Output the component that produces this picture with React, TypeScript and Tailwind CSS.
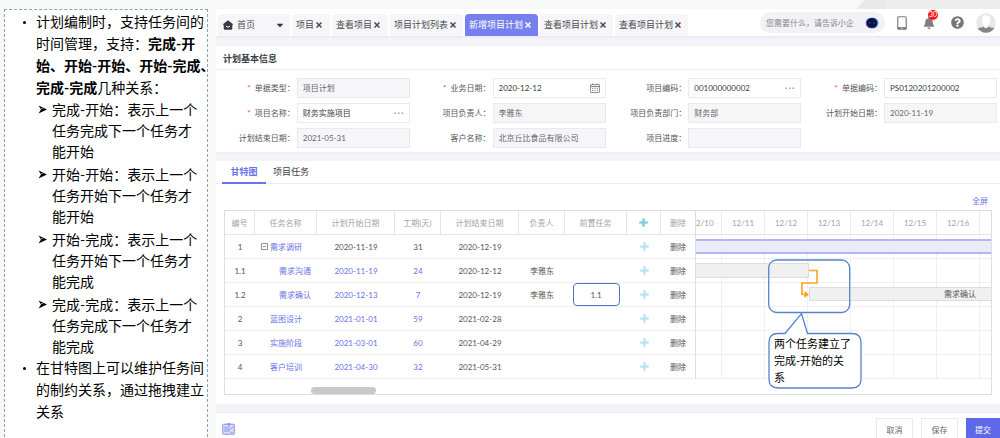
import type { ReactNode } from "react";
import clsx from "clsx";
import { FaBell, FaCaretDown, FaQuestionCircle } from "react-icons/fa";

type Task = {
  no: string;
  name: string;
  level: number;
  start: string;
  days: string;
  end: string;
  owner?: string;
  prev?: string;
  summary?: boolean;
};

const tasks: Task[] = [
  { no: "1", name: "需求调研", level: 0, start: "2020-11-19", days: "31", end: "2020-12-19", summary: true },
  { no: "1.1", name: "需求沟通", level: 1, start: "2020-11-19", days: "24", end: "2020-12-12", owner: "李雅东" },
  { no: "1.2", name: "需求确认", level: 1, start: "2020-12-13", days: "7", end: "2020-12-19", owner: "李雅东", prev: "1.1" },
  { no: "2", name: "蓝图设计", level: 0, start: "2021-01-01", days: "59", end: "2021-02-28" },
  { no: "3", name: "实施阶段", level: 0, start: "2021-03-01", days: "60", end: "2021-04-29" },
  { no: "4", name: "客户培训", level: 0, start: "2021-04-30", days: "32", end: "2021-05-31" },
];

const relations = [
  ["完成-开始：表示上一个", "任务完成下一个任务才", "能开始"],
  ["开始-开始：表示上一个", "任务开始下一个任务才", "能开始"],
  ["开始-完成：表示上一个", "任务开始下一个任务才", "能完成"],
  ["完成-完成：表示上一个", "任务完成下一个任务才", "能完成"],
];

const tabs = [
  { label: "项目", width: "w-[38px]" },
  { label: "查看项目", width: "w-[56px]" },
  { label: "项目计划列表", width: "w-[73px]" },
  { label: "新增项目计划", width: "w-[73px]", active: true },
  { label: "查看项目计划", width: "w-[73px]" },
  { label: "查看项目计划", width: "w-[73px]" },
];

type FieldDef = {
  id: string;
  label: string;
  value: string;
  required?: boolean;
  editable?: boolean;
  icon?: "dots" | "calendar";
};

const fields: FieldDef[] = [
  { id: "type", label: "单据类型", value: "项目计划", required: true },
  { id: "date", label: "业务日期", value: "2020-12-12", required: true, editable: true, icon: "calendar" },
  { id: "code", label: "项目编码", value: "001000000002", editable: true, icon: "dots" },
  { id: "bill", label: "单据编码", value: "PS0120201200002", required: true, editable: true },
  { id: "name", label: "项目名称", value: "财务实施项目", required: true, editable: true, icon: "dots" },
  { id: "owner", label: "项目负责人", value: "李雅东" },
  { id: "dept", label: "项目负责部门", value: "财务部" },
  { id: "start", label: "计划开始日期", value: "2020-11-19" },
  { id: "end", label: "计划结束日期", value: "2021-05-31" },
  { id: "customer", label: "客户名称", value: "北京丘比食品有限公司" },
  { id: "progress", label: "项目进度", value: "" },
];

const days = ["12/11", "12/12", "12/13", "12/14", "12/15", "12/16"];

const HomeIcon = () => (
  <svg viewBox="0 0 20 20" className="size-[10px]" fill="#3a3a42" aria-hidden>
    <path d="M10 0.5 L19.5 8 V10.5 H18.5 V17.5 Q18.5 19.5 16.5 19.5 H3.5 Q1.5 19.5 1.5 17.5 V10.5 H0.5 V8 Z" />
    <path d="M6 12.5 Q10 16 14 12.5" fill="none" stroke="#fff" strokeWidth="2" />
  </svg>
);

const CloseIcon = () => (
  <svg viewBox="0 0 12 12" className="size-[6px]" stroke="currentColor" strokeWidth="3" aria-hidden>
    <path d="M1 1 L11 11 M11 1 L1 11" />
  </svg>
);

const PlusIcon = () => (
  <svg viewBox="0 0 18 18" className="mx-auto size-[9px]" stroke="currentColor" strokeWidth="5" aria-hidden>
    <path d="M9 0.5 V17.5 M0.5 9 H17.5" />
  </svg>
);

const CalendarIcon = () => (
  <svg viewBox="0 0 20 20" className="size-[10px]" fill="none" stroke="#88888e" strokeWidth="1.8" aria-hidden>
    <rect x="1" y="3" width="18" height="16" rx="1" />
    <path d="M1 7 H19" strokeWidth="2.6" />
    <path d="M5.5 0.5 V4 M14.5 0.5 V4" />
    <path d="M4 11 H16 M4 15 H16" strokeDasharray="2.4 2.4" />
  </svg>
);

const RobotIcon = () => (
  <svg viewBox="0 0 40 36" className="h-[12px] w-[14px]" aria-hidden>
    <rect x="1" y="2" width="38" height="32" rx="16" fill="#5b4fe0" />
    <path d="M20 2 A16 16 0 0 1 20 34 H24 A15 16 0 0 0 24 2 Z" fill="#37b6e8" />
    <rect x="4" y="4" width="32" height="28" rx="14" fill="#0b1240" />
    <circle cx="14" cy="18" r="2" fill="#2f66b8" />
    <circle cx="26" cy="18" r="2" fill="#2f66b8" />
  </svg>
);

const PhoneIcon = () => (
  <svg viewBox="0 0 20 28" className="h-[14px] w-[10px]" aria-hidden>
    <rect x="1.5" y="1.5" width="17" height="25" rx="2" fill="#fff" stroke="#808083" strokeWidth="2.4" />
    <path d="M1.5 22 H18.5 V26.5 H1.5 Z" fill="#808083" />
    <circle cx="10" cy="24.2" r="1.4" fill="#fff" />
  </svg>
);

const AvatarIcon = () => (
  <svg viewBox="0 0 44 48" className="h-[22px] w-[20px]" aria-hidden>
    <circle cx="22" cy="24" r="21.5" fill="#e8e8e8" />
    <path d="M3.5 35 Q14 34 17 31 H27 Q30 34 40.5 35 A21.5 21.5 0 0 1 3.5 35 Z" fill="#858587" />
    <path d="M13 16 Q13 7 22 7 Q31 7 31 16 Q31 25 27 29 V33 Q22 38 17 33 V29 Q13 25 13 16 Z" fill="#fff" />
  </svg>
);

const BoardIcon = () => (
  <svg viewBox="0 0 26 26" className="size-[13px]" fill="none" stroke="#8a90ee" strokeWidth="2" aria-hidden>
    <rect x="1.5" y="4.5" width="23" height="20" rx="1" fill="#dcdefb" />
    <path d="M6 9 V20 M10 9 V20 M14 2 V20 M9 4 H18 M17 15 L22 9 M17 20.5 H22" />
  </svg>
);

const Dot = () => (
  <span className="flex h-[22px] w-[31px] shrink-0 items-center pl-[18px]">
    <span className="size-[3px] rounded-full bg-black" />
  </span>
);

function Notes() {
  return (
    <aside className="w-[204px] shrink-0 self-stretch border border-b-0 border-dashed border-[#8fa3ab] bg-white pt-px text-sm whitespace-nowrap text-black">
      <ul>
        <li className="flex leading-[22px]">
          <Dot />
          <p>
            计划编制时，支持任务间的
            <br />
            时间管理，支持：<b>完成-开</b>
            <br />
            <b>始、开始-开始、开始-完成、</b>
            <br />
            <b>完成-完成</b>几种关系：
          </p>
        </li>
        <li>
          <ul className="flex flex-col gap-[2px] pl-[33px] leading-[21px]">
            {relations.map((lines) => (
              <li key={lines[0]} className="flex">
                <span className="flex h-[21px] w-[14px] shrink-0 items-center">
                  <svg viewBox="0 0 18 18" className="size-[9px]" aria-hidden>
                    <path d="M1 1 L18 9 L1 17 L6 9 Z" fill="#000" />
                    <path d="M5.5 5.5 L11 8.2 H7.5 Z" fill="#fff" />
                  </svg>
                </span>
                <p>
                  {lines.map((line) => (
                    <span key={line} className="block">
                      {line}
                    </span>
                  ))}
                </p>
              </li>
            ))}
          </ul>
        </li>
        <li className="flex leading-[22px]">
          <Dot />
          <p>
            在甘特图上可以维护任务间
            <br />
            的制约关系，通过拖拽建立
            <br />
            关系
          </p>
        </li>
      </ul>
    </aside>
  );
}

function TopBar() {
  return (
    <header className="flex h-[29px] shrink-0 items-end justify-between border-b-2 border-[#ebebf9] bg-white pl-[2px]">
      <nav className="flex gap-[2px] text-[9px] text-[#4a4a50]">
        <button className="flex h-[22px] w-[72px] items-center gap-1 rounded-t bg-[#f6f6f8] px-[5px]">
          <HomeIcon />
          <span>首页</span>
          <FaCaretDown className="ml-auto size-[10px] text-[#333]" />
        </button>
        {tabs.map((tab, i) => (
          <button
            key={i}
            className={clsx(
              "flex h-[22px] items-center gap-[2px] rounded-t pl-1 whitespace-nowrap",
              tab.width,
              tab.active ? "bg-[#7580ee] text-white" : "bg-[#f6f6f8]"
            )}
          >
            {tab.label}
            <CloseIcon />
          </button>
        ))}
      </nav>
      <div className="flex h-[27px] items-center pr-1">
        <label className="mr-3 flex h-[21px] w-[125px] items-center rounded-full bg-[#f1f1f6] pr-[6px] pl-[6px]">
          <input
            aria-label="搜索"
            placeholder="您需要什么，请告诉小企"
            className="w-0 min-w-0 flex-1 text-[8px] outline-none placeholder:text-[#85858c]"
          />
          <RobotIcon />
        </label>
        <button aria-label="手机" className="mr-4">
          <PhoneIcon />
        </button>
        <button aria-label="消息" className="relative mr-4 text-[#808083]">
          <FaBell className="size-[12px]" />
          <span className="absolute -top-[7px] left-[5px] flex size-[10px] items-center justify-center rounded-full bg-[#fb1414] text-[7px] text-white">
            30
          </span>
        </button>
        <button aria-label="帮助" className="mr-3 text-[#77777b]">
          <FaQuestionCircle className="size-[13px]" />
        </button>
        <button aria-label="账户">
          <AvatarIcon />
        </button>
      </div>
    </header>
  );
}

function Field({ field }: { field: FieldDef }) {
  return (
    <div className="flex items-center justify-end gap-[2px]">
      <label htmlFor={field.id} className="whitespace-nowrap text-[#55555c]">
        {field.required && <span className="mr-1 text-[#f5494d]">*</span>}
        {field.label}：
      </label>
      <div
        className={clsx(
          "flex h-5 w-[113px] items-center border border-[#e9e9ef] px-[5px]",
          field.editable ? "bg-white" : "bg-[#f6f6f9]"
        )}
      >
        <input
          id={field.id}
          defaultValue={field.value}
          readOnly={!field.editable}
          className={clsx("w-0 min-w-0 flex-1 outline-none", field.editable ? "text-[#3c3c44]" : "text-[#66666e]")}
        />
        {field.icon === "calendar" && <CalendarIcon />}
        {field.icon === "dots" && (
          <svg viewBox="0 0 20 4" className="h-[2px] w-[10px]" fill="#a0a0a6" aria-hidden>
            <path d="M1 1 H4 V4 H1 Z M8 1 H11 V4 H8 Z M15 1 H18 V4 H15 Z" />
          </svg>
        )}
      </div>
    </div>
  );
}

function BasicInfo() {
  return (
    <section className="shrink-0 border-b border-[#eeeef4] bg-white">
      <h2 className="flex h-6 items-center border-b border-[#eeeef2] px-[7px] pt-[2px] text-[9px] font-bold text-[#3c3c44]">
        计划基本信息
      </h2>
      <form className="grid grid-cols-4 gap-x-[2px] gap-y-[5px] pt-2 pr-[3px] pb-[4px]">
        {fields.map((field) => (
          <Field key={field.id} field={field} />
        ))}
      </form>
    </section>
  );
}

function Th({ children }: { children: ReactNode }) {
  return <th className="border-r border-b border-[#e4e4e6] font-normal">{children}</th>;
}

function TaskTable() {
  return (
    <table className="w-[471px] shrink-0 table-fixed border-separate border-spacing-0 border-r border-[#dedee0] text-center text-[#55555b]">
      <colgroup>
        <col className="w-[30px]" />
        <col className="w-[62px]" />
        <col className="w-[78px]" />
        <col className="w-[46px]" />
        <col className="w-[78px]" />
        <col className="w-[46px]" />
        <col className="w-[62px]" />
        <col className="w-[34px]" />
        <col className="w-[34px]" />
      </colgroup>
      <thead>
        <tr className="h-6 text-[#a3a3a8]">
          <Th>编号</Th>
          <Th>任务名称</Th>
          <Th>计划开始日期</Th>
          <Th>工期(天)</Th>
          <Th>计划结束日期</Th>
          <Th>负责人</Th>
          <Th>前置任务</Th>
          <Th>
            <span className="text-[#7fd0e2]">
              <PlusIcon />
            </span>
          </Th>
          <th className="border-b border-[#e4e4e6] font-normal">删除</th>
        </tr>
      </thead>
      <tbody>
        {tasks.map((task) => (
          <tr key={task.no} className="h-6 *:border-b *:border-[#f0f0f2]">
            <td>{task.no}</td>
            <td className="text-[#6a72e8]">
              <div className={clsx("flex items-center", task.summary ? "gap-[2px] pl-[6px]" : task.level ? "pl-6" : "pl-[15px]")}>
                {task.summary && (
                  <svg viewBox="0 0 14 14" className="size-[7px]" fill="none" stroke="#88888c" strokeWidth="1.8" aria-hidden>
                    <path d="M1 1 H13 V13 H1 Z M4 7 H10" />
                  </svg>
                )}
                <a href="#task">{task.name}</a>
              </div>
            </td>
            <td className={clsx(!task.summary && "text-[#6a72e8]")}>{task.start}</td>
            <td className={clsx(!task.summary && "text-[#6a72e8]")}>{task.days}</td>
            <td>{task.end}</td>
            <td>{task.owner}</td>
            <td>
              {task.prev && (
                <span className="mx-auto flex h-[23px] w-[47px] items-center justify-center rounded border border-[#4a78cc]">
                  {task.prev}
                </span>
              )}
            </td>
            <td>
              <button aria-label="新增" className="block w-full text-[#b8e6ef]">
                <PlusIcon />
              </button>
            </td>
            <td>
              <button>删除</button>
            </td>
          </tr>
        ))}
      </tbody>
    </table>
  );
}

function Chart() {
  return (
    <div className="min-w-0 flex-1">
      <div className="flex h-6 border-b border-[#e4e4e6] text-[#a3a3a8]">
        <div className="flex w-[26px] shrink-0 items-center border-r border-[#ececee]">2/10</div>
        {days.map((day) => (
          <div key={day} className="flex w-[43px] shrink-0 items-center justify-center border-r border-[#ececee]">
            {day}
          </div>
        ))}
      </div>
      <div className="relative">
        {tasks.map((task) => (
          <div key={task.no} className="flex h-6 border-b border-[#f0f0f2]">
            <div className="w-[26px] shrink-0 border-r border-[#f0f0f2]" />
            {days.map((day) => (
              <div key={day} className="w-[43px] shrink-0 border-r border-[#f0f0f2]" />
            ))}
          </div>
        ))}

        {/* bars */}
        <div className="absolute inset-x-0 top-1 h-[15px] border-y-2 border-[#b1b5f0] bg-[#ebebfb]" />
        <div className="absolute top-[28px] left-0 h-[15px] w-[113px] border border-l-0 border-[#dcdcdc] bg-[#f0f0f0]" />
        <div className="absolute top-[52px] right-0 left-[113px] flex h-[14px] items-center justify-end border border-r-0 border-[#dcdcdc] bg-[#f0f0f0] pr-[15px] text-[#55555b]">
          需求确认
        </div>

        {/* finish-to-start link, highlight frame and callout */}
        <svg viewBox="0 0 170 160" className="absolute top-0 left-0 h-[160px] w-[170px]" fill="none" aria-hidden>
          <path d="M113 35.5 H121 V48 H106 V59.5 H109" stroke="#fba31c" strokeWidth="1.6" />
          <path d="M108.5 56 L113 59.5 L108.5 63 Z" fill="#fba31c" />
          <rect x="72.7" y="25" width="81" height="52.5" rx="8" stroke="#5584cc" strokeWidth="1.3" />
          <path
            d="M82 98.5 H89 L105.5 78.5 L111.5 98.5 H156 Q165 98.5 165 107.5 V144 Q165 153 156 153 H82 Q73 153 73 144 V107.5 Q73 98.5 82 98.5 Z"
            fill="#fff"
            stroke="#5584cc"
            strokeWidth="1.3"
          />
        </svg>
        <p className="absolute top-[100px] left-[78px] text-[11px] leading-[17px] whitespace-nowrap text-black">
          两个任务建立了
          <br />
          完成-开始的关
          <br />系
        </p>
      </div>
    </div>
  );
}

function GanttPanel() {
  return (
    <section className="shrink-0 bg-white pb-[9px]">
      <div className="flex h-[23px] border-b border-[#eeeef2] px-[6px] text-[9px]">
        <button className="h-[23px] w-[44px] border-b-2 border-[#6a72ee] font-bold text-[#6a72ee]">甘特图</button>
        <button className="ml-[7px] text-[#3c3c44]">项目任务</button>
      </div>
      <div className="flex justify-end pt-[11px] pr-3 pb-[3px] leading-3">
        <a href="#full" className="text-[#6a72e8]">
          全屏
        </a>
      </div>
      <div className="mr-2 ml-2 border border-[#dedee0]">
        <div className="flex">
          <TaskTable />
          <Chart />
        </div>
        <div className="flex h-[15px] items-end pl-[86px]">
          <div className="h-[7px] w-[65px] rounded-full bg-[#c9c9c9]" />
        </div>
      </div>
    </section>
  );
}

export default function App() {
  return (
    <div className="h-screen overflow-hidden bg-[#f6f9f8] font-[Lato,'Noto_Sans_CJK_SC',sans-serif] text-[8px]">
      <div className="flex h-[9px] justify-end">
        <svg viewBox="0 0 143 9" className="h-[9px] w-[143px]" aria-hidden>
          <path d="M7 0 H143 V9 H0 Z" fill="#ededed" />
          <path d="M7 0 H29 V9 H0 Z" fill="#e8e9e9" />
        </svg>
      </div>
      <div className="flex h-full gap-2 pl-1">
        <Notes />
        <main className="flex min-w-0 flex-1 flex-col gap-2 self-start bg-[#f4f4f8]">
          <TopBar />
          <BasicInfo />
          <GanttPanel />
          <footer className="flex h-[32px] shrink-0 items-start justify-between border-t border-[#ededf2] bg-white pt-[5px] pl-[6px] text-[#66666c]">
            <button aria-label="看板" className="pt-[4px]">
              <BoardIcon />
            </button>
            <div className="flex gap-2">
              <button className="h-6 w-[37px] border border-[#e9e9ee]">取消</button>
              <button className="h-6 w-[37px] border border-[#e9e9ee]">保存</button>
              <button className="h-6 w-[34px] bg-[#5f68e8] text-white">提交</button>
            </div>
          </footer>
        </main>
      </div>
    </div>
  );
}
